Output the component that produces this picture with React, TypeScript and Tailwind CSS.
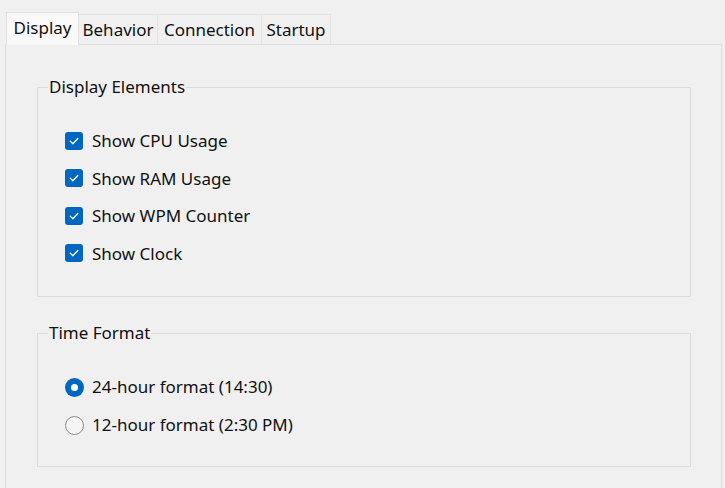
import React from "react";

const font = { fontFamily: '"Noto Sans", "Segoe UI", sans-serif' };

function Check({ label }: { label: string }) {
  return (
    <div className="flex items-center h-[37.5px]">
      <span className="w-[18px] h-[18px] rounded-[3px] bg-[#0067c0] flex items-center justify-center">
        <svg width="12" height="12" viewBox="0 0 12 12">
          <path d="M2.3 6.2 L4.9 8.7 L9.8 3.5" fill="none" stroke="white" strokeWidth="1.3" strokeLinecap="round" strokeLinejoin="round" />
        </svg>
      </span>
      <span className="ml-[9px] text-[17px] text-[#111]">{label}</span>
    </div>
  );
}

function Radio({ label, checked }: { label: string; checked?: boolean }) {
  return (
    <div className="flex items-center h-[38px]">
      {checked ? (
        <span className="w-[19px] h-[19px] rounded-full bg-[#0067c0] flex items-center justify-center">
          <span className="w-[7px] h-[7px] rounded-full bg-white" />
        </span>
      ) : (
        <span className="w-[19px] h-[19px] rounded-full border border-[#8a8a8a] bg-[#f5f5f5]" />
      )}
      <span className="ml-[8px] text-[17px] text-[#111]">{label}</span>
    </div>
  );
}

export default function App() {
  const tabs = [
    { label: "Display", w: "w-[73px]", active: true },
    { label: "Behavior", w: "w-[79px]" },
    { label: "Connection", w: "w-[104px]" },
    { label: "Startup", w: "w-[69px]" },
  ];
  return (
    <div style={font} className="w-[725px] h-[488px] bg-[#f0f0f0] overflow-hidden pt-[12px] pl-[5px] flex flex-col">
      <div className="flex items-end h-[32px] pl-[1px] relative z-10">
        {tabs.map((t) =>
          t.active ? (
            <div key={t.label} className={`${t.w} h-[33px] -mb-[1px] bg-[#f9f9f9] border border-b-0 border-[#e0e0e0] flex items-center justify-center text-[17px] text-[#111] pb-[3px]`}>
              {t.label}
            </div>
          ) : (
            <div key={t.label} className={`${t.w} h-[30px] bg-[#f0f0f0] border border-b-0 border-l-0 border-[#e3e3e3] flex items-center justify-center text-[17px] text-[#111]`}>
              {t.label}
            </div>
          )
        )}
      </div>
      <div className="w-[717px] flex-1 border border-[#dedede] border-b-0 bg-[#f0f0f0] pl-[31px] pt-[32px] flex flex-col">
        <fieldset className="w-[654px] h-[220px] border border-[#dcdcdc]">
          <legend className="ml-[10px] px-[1px] text-[17px] leading-[20px] text-[#111]">Display Elements</legend>
          <div className="pt-[25px] pl-[27px] flex flex-col">
            <Check label="Show CPU Usage" />
            <Check label="Show RAM Usage" />
            <Check label="Show WPM Counter" />
            <Check label="Show Clock" />
          </div>
        </fieldset>
        <fieldset className="mt-[26px] w-[654px] h-[144px] border border-[#dcdcdc]">
          <legend className="ml-[10px] px-[1px] text-[17px] leading-[20px] text-[#111]">Time Format</legend>
          <div className="pt-[25px] pl-[27px] flex flex-col">
            <Radio label="24-hour format (14:30)" checked />
            <Radio label="12-hour format (2:30 PM)" />
          </div>
        </fieldset>
      </div>
    </div>
  );
}
